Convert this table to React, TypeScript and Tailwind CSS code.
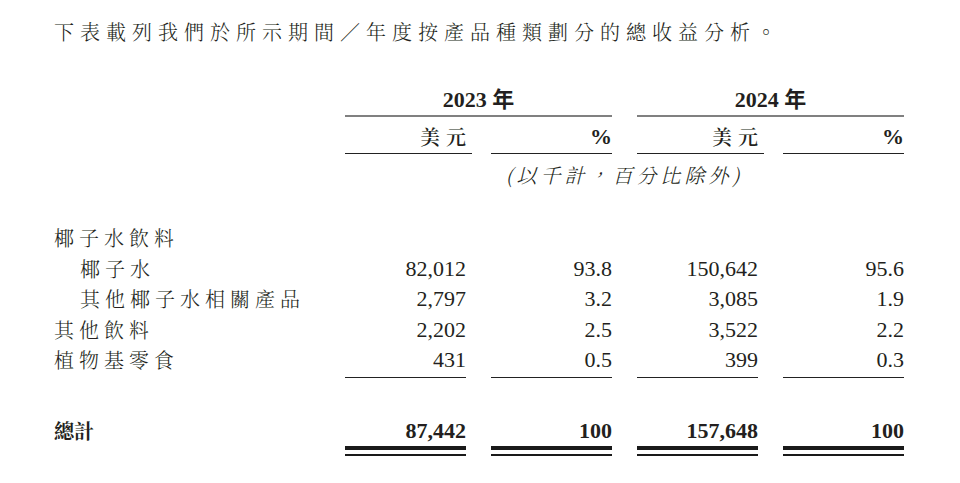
import React from 'react';

const CJK = 'font-["Noto_Serif_CJK_TC","Noto_Sans_CJK_TC",sans-serif]';
const NUM = 'font-["Liberation_Serif","Noto_Sans_CJK_TC",serif]';

type Row = { label: string; indent?: boolean; v: [string, string, string, string] };

const rows: Row[] = [
  { label: '椰子水飲料', v: ['', '', '', ''] },
  { label: '椰子水', indent: true, v: ['82,012', '93.8', '150,642', '95.6'] },
  { label: '其他椰子水相關產品', indent: true, v: ['2,797', '3.2', '3,085', '1.9'] },
  { label: '其他飲料', v: ['2,202', '2.5', '3,522', '2.2'] },
  { label: '植物基零食', v: ['431', '0.5', '399', '0.3'] },
];

const totals = ['87,442', '100', '157,648', '100'];

export default function App() {
  return (
    <div className="w-[960px] h-[483px] bg-white text-[#231f20] pl-[54px] pt-[17px] overflow-hidden">
      {/* Intro */}
      <p className={`${CJK} font-light text-[20px] leading-[30px] tracking-[6px] whitespace-nowrap`}>
        下表載列我們於所示期間／年度按產品種類劃分的總收益分析。
      </p>

      <div className="grid grid-cols-[266px_121px_121px_121px_121px] gap-x-[25px] mt-[37px]">
        {/* year headers */}
        <div />
        {['2023', '2024'].map(y => (
          <div
            key={y}
            className={`col-span-2 h-[33px] border-b-2 border-[#808080] text-center ${NUM} font-bold text-[22px] leading-[31px]`}
          >
            {y} 年
          </div>
        ))}

        {/* currency / percent headers */}
        <div />
        {['美元', '%', '美元', '%'].map((h, i) => (
          <div
            key={i}
            className={`h-[36.5px] pt-[6px] border-b-[1.5px] border-[#222] text-right leading-[28px] ${
              h === '%' ? `${NUM} font-bold text-[22px]` : `${CJK} font-semibold text-[20px] tracking-[6px] -mr-[6px]`
            }`}
          >
            {h}
          </div>
        ))}

        {/* note */}
        <div />
        <div className={`col-span-4 mt-[7px] h-[28px] text-center italic ${CJK} font-light text-[20px] leading-[28px] tracking-[4px]`}>
          (以千計，百分比除外)
        </div>

        <div className="col-span-5 h-[34.5px]" />

        {/* body */}
        {rows.map(r => (
          <React.Fragment key={r.label}>
            <div
              className={`${CJK} font-light text-[20px] leading-[30.5px] h-[30.5px] tracking-[5px] whitespace-nowrap ${
                r.indent ? 'pl-[26px]' : ''
              }`}
            >
              {r.label}
            </div>
            {r.v.map((v, i) => (
              <div key={i} className={`${NUM} text-[22px] leading-[30.5px] h-[30.5px] text-right`}>
                {v}
              </div>
            ))}
          </React.Fragment>
        ))}

        {/* subtotal rule */}
        <div />
        {[0, 1, 2, 3].map(i => (
          <div key={i} className="mt-[1px] border-t border-[#222]" />
        ))}

        <div className="col-span-5 h-[38px]" />

        {/* total */}
        <div className={`${CJK} font-bold text-[20px] leading-[30px] h-[30px]`}>總計</div>
        {totals.map((t, i) => (
          <div key={i}>
            <div className={`${NUM} font-bold text-[22px] leading-[30px] h-[30px] text-right`}>{t}</div>
            <div className="h-[4px] bg-[#1a1a1a]" />
            <div className="h-[4.5px]" />
            <div className="h-[1.5px] bg-[#1a1a1a]" />
          </div>
        ))}
      </div>
    </div>
  );
}
